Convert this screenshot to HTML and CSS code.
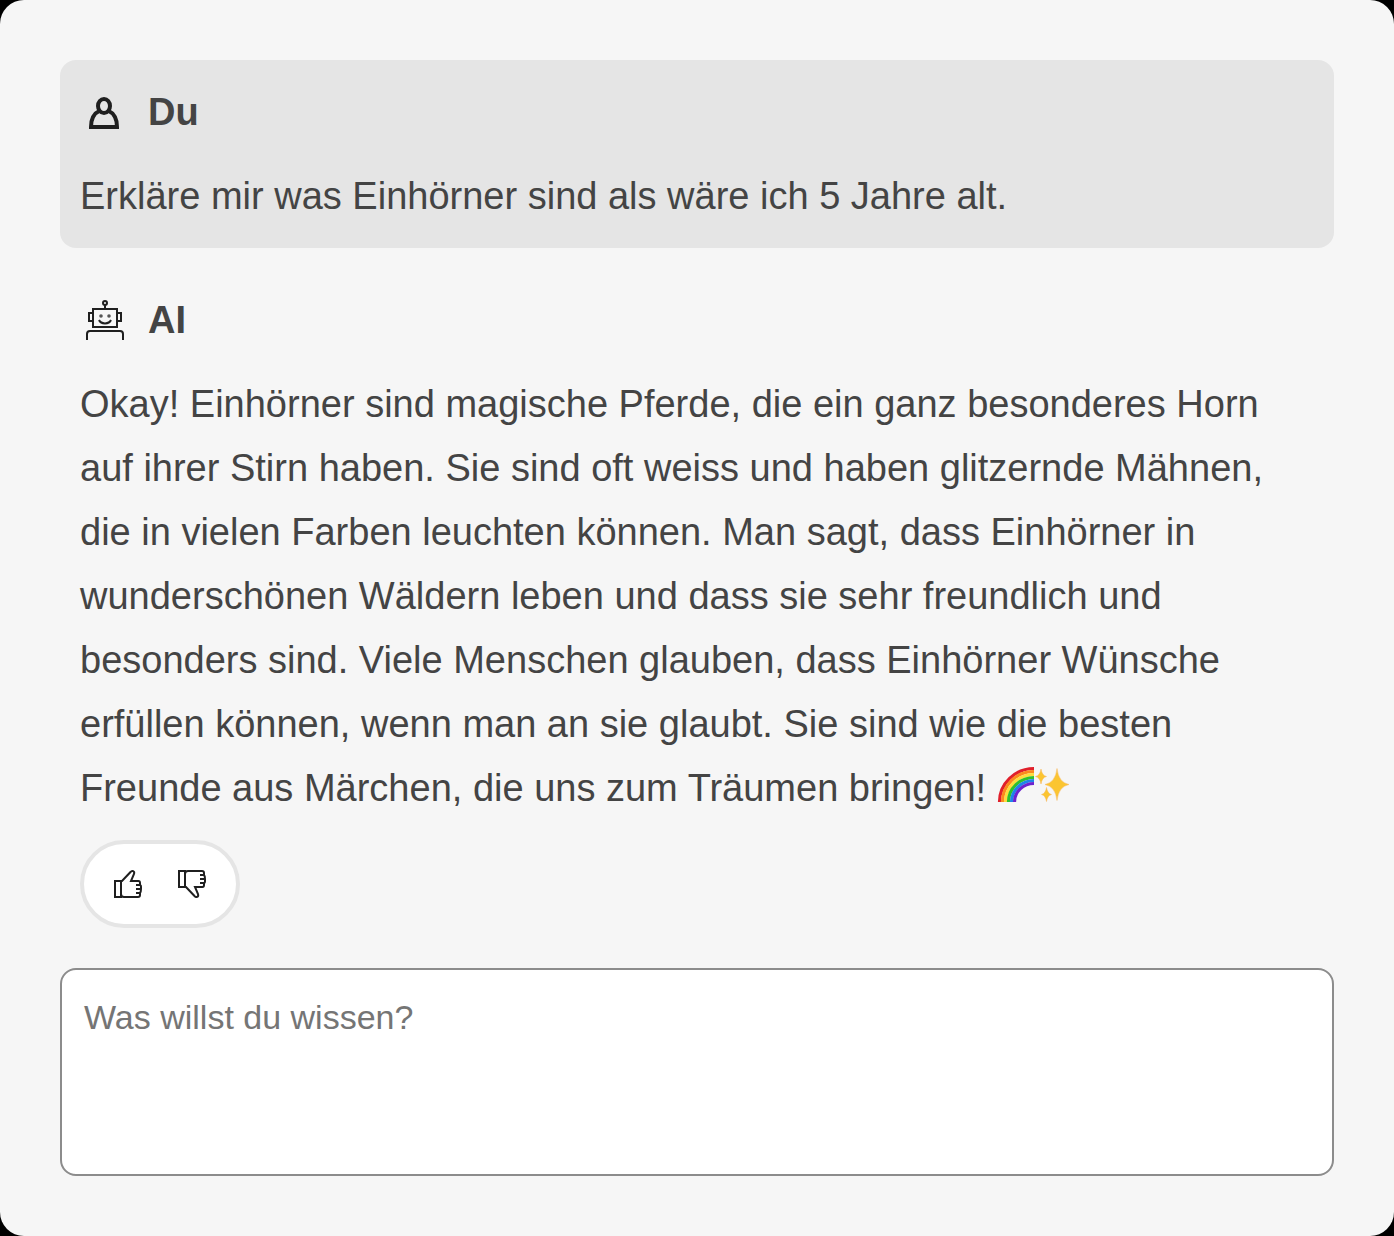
FILE: index.html
```html
<!DOCTYPE html>
<html lang="de">
<head>
<meta charset="utf-8">
<meta name="viewport" content="width=device-width, initial-scale=1">
<title>Chat</title>
<link rel="stylesheet" href="styles.css">
</head>
<body>
<main class="chat">
  <article class="message message-user">
    <header class="message-header">
      <svg class="avatar" viewBox="0 0 48 48" aria-hidden="true">
        <g fill="none" stroke="#1f1f1f" stroke-width="4">
          <ellipse cx="24" cy="18" rx="6" ry="7"/>
          <path d="M20 22.500C14.500 25 11 31 11 39H37C37 31 33.500 25 28 22.500"/>
        </g>
      </svg>
      <h2 class="author">Du</h2>
    </header>
    <p class="text">Erkläre mir was Einhörner sind als wäre ich 5 Jahre alt.</p>
  </article>

  <article class="message">
    <header class="message-header">
      <svg class="avatar" viewBox="0 0 48 48" aria-hidden="true">
        <g fill="none" stroke="#1f1f1f" stroke-width="2">
          <circle cx="25" cy="7" r="2"/>
          <path d="M25 9V13M13 13H37V31H13ZM13 17H9V25H13M37 17H41V25H37"/>
          <path d="M19 24C21 28.500 29 28.500 31 24"/>
          <path d="M7 44V38Q7 35 10 35H40Q43 35 43 38V44"/>
        </g>
        <g fill="#555"><circle cx="21" cy="20" r="1.800"/><circle cx="29" cy="20" r="1.800"/></g>
      </svg>
      <h2 class="author">AI</h2>
    </header>
    <p class="text">Okay! Einhörner sind magische Pferde, die ein ganz besonderes Horn auf ihrer Stirn haben. Sie sind oft weiss und haben glitzernde Mähnen, die in vielen Farben leuchten können. Man sagt, dass Einhörner in wunderschönen Wäldern leben und dass sie sehr freundlich und besonders sind. Viele Menschen glauben, dass Einhörner Wünsche erfüllen können, wenn man an sie glaubt. Sie sind wie die besten Freunde aus Märchen, die uns zum Träumen bringen! <svg class="emoji" viewBox="0 0 72 36" role="img" aria-label="Regenbogen und Funkeln">
        <g fill="none" stroke-width="3.200">
          <path stroke="#e0202b" d="M2.500 35A34.500 33.500 0 0 1 37 1.500"/>
          <path stroke="#fb8a1e" d="M5.500 35A31.500 30.500 0 0 1 37 4.500"/>
          <path stroke="#fddc3c" d="M8.500 35A28.500 27.500 0 0 1 37 7.500"/>
          <path stroke="#2fc02c" d="M11.500 35A25.500 24.500 0 0 1 37 10.500"/>
          <path stroke="#1f83ea" d="M14.500 35A22.500 21.500 0 0 1 37 13.500"/>
          <path stroke="#6c22cf" d="M17.500 35A19.500 18.500 0 0 1 37 16.500"/>
        </g>
        <g fill="#fbc531" stroke="#f6b45a" stroke-width=".5">
          <path d="M60 1.500Q61.500 15.500 72 17.500Q61.500 19.500 60 33.500Q58.500 19.500 48 17.500Q58.500 15.500 60 1.500Z"/>
          <path d="M44 2Q45 8.500 49.500 9.500Q45 10.500 44 17Q43 10.500 38.500 9.500Q43 8.500 44 2Z"/>
          <path d="M49.500 20.500Q50.500 26.500 54.500 27.500Q50.500 28.500 49.500 34.500Q48.500 28.500 44.500 27.500Q48.500 26.500 49.500 20.500Z"/>
        </g>
      </svg></p>
    <div class="feedback">
      <button class="vote" type="button" aria-label="Hilfreich">
        <svg class="vote-icon" viewBox="0 0 32 32" aria-hidden="true">
          <g fill="none" stroke="#1f1f1f" stroke-width="2">
            <path d="M3 13H9V29H3Z"/>
            <path d="M9 13H10L18.500 4C20 2 23 3 22 6L19 13H26.500Q28 13 28 15V17Q29 17 29 19V21Q29 24 28 25V27Q28 29 26 29H12Q9 29 9 26"/>
            <path d="M24 17H29M24 21H29M24 25H29"/>
          </g>
        </svg>
      </button>
      <button class="vote" type="button" aria-label="Nicht hilfreich">
        <svg class="vote-icon" viewBox="0 0 32 32" aria-hidden="true">
          <g fill="none" stroke="#1f1f1f" stroke-width="2" transform="matrix(1 0 0 -1 0 32)">
            <path d="M3 13H9V29H3Z"/>
            <path d="M9 13H10L18.500 4C20 2 23 3 22 6L19 13H26.500Q28 13 28 15V17Q29 17 29 19V21Q29 24 28 25V27Q28 29 26 29H12Q9 29 9 26"/>
            <path d="M24 17H29M24 21H29M24 25H29"/>
          </g>
        </svg>
      </button>
    </div>
  </article>

  <form class="prompt">
    <textarea class="prompt-input" aria-label="Deine Frage" placeholder="Was willst du wissen?"></textarea>
  </form>
</main>
</body>
</html>
```
FILE: styles.css
```css
* {
  box-sizing: border-box;
}

html {
  background: #000;
}

body {
  margin: 0;
  color: #444;
  font-family: "Liberation Sans", Arial, sans-serif;
  font-size: 38px;
  line-height: 64px;
}

.chat {
  display: flex;
  flex-direction: column;
  gap: 20px;
  min-height: 100vh;
  padding: 60px;
  border-radius: 24px;
  background: #f6f6f6;
}

.message {
  display: flex;
  flex-direction: column;
  gap: 20px;
  padding: 20px;
  border-radius: 16px;
}

.message-user {
  background: #e5e5e5;
}

.message-header {
  display: flex;
  align-items: center;
  gap: 20px;
}

.avatar {
  width: 48px;
  height: 48px;
}

.author {
  margin: 0;
  font-size: inherit;
  font-weight: 700;
}

.text {
  margin: 0;
}

.emoji {
  width: 72px;
  height: 36px;
  overflow: visible;
  vertical-align: -2px;
}

.feedback {
  display: flex;
  align-self: flex-start;
  gap: 32px;
  padding: 24px 28px;
  border: 4px solid #e5e5e5;
  border-radius: 44px;
  background: #fff;
}

.vote {
  display: flex;
  padding: 0;
  border: 0;
  background: none;
  cursor: pointer;
}

.vote-icon {
  width: 32px;
  height: 32px;
}

.prompt {
  display: flex;
  flex: 1;
}

.prompt-input {
  flex: 1;
  min-height: 208px;
  padding: 24px 22px;
  border: 2px solid #8c8c8c;
  border-radius: 16px;
  background: #fff;
  color: #444;
  font-family: inherit;
  font-size: 34px;
  line-height: 46px;
  resize: none;
}

.prompt-input::placeholder {
  color: #757575;
  opacity: 1;
}
```
